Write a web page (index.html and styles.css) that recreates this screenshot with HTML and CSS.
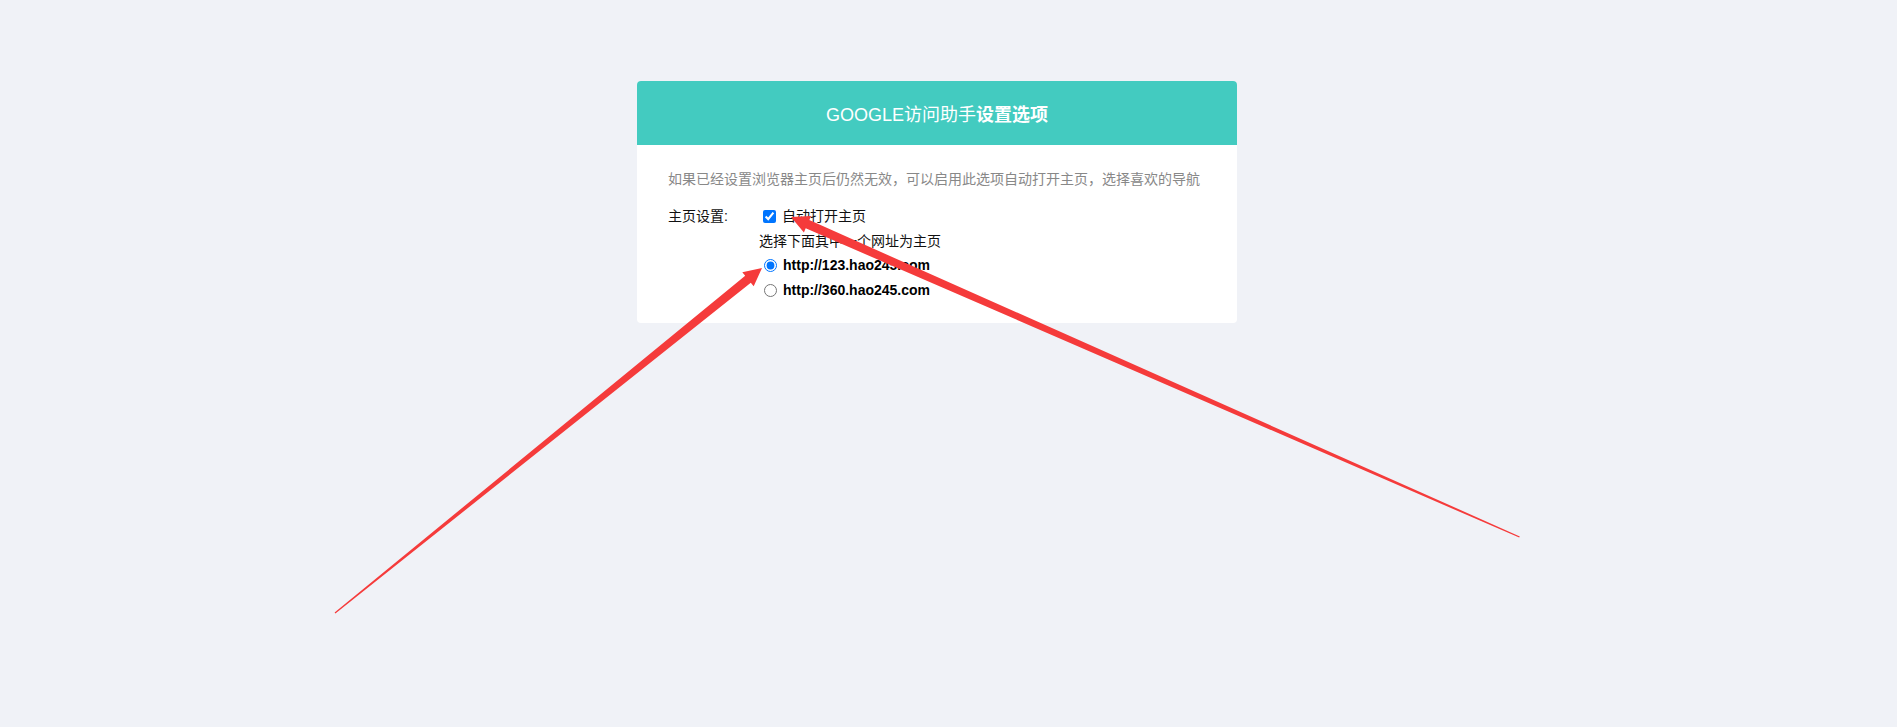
FILE: index.html
```html
<!DOCTYPE html>
<html lang="zh-CN">
<head>
<meta charset="utf-8">
<title>GOOGLE访问助手设置选项</title>
<link rel="stylesheet" href="styles.css">
</head>
<body>
<div class="page">
  <div class="card">
    <div class="card-head">GOOGLE访问助手<b>设置选项</b></div>
    <div class="card-body">
      <p class="desc">如果已经设置浏览器主页后仍然无效，可以启用此选项自动打开主页，选择喜欢的导航</p>
      <div class="row">
        <div class="label">主页设置:</div>
        <div class="options">
          <label class="opt"><input type="checkbox" class="chk" checked>自动打开主页</label>
          <div class="hint">选择下面其中一个网址为主页</div>
          <label class="opt url"><input type="radio" class="rad" name="home" checked>http://123.hao245.com</label>
          <label class="opt url"><input type="radio" class="rad" name="home">http://360.hao245.com</label>
        </div>
      </div>
    </div>
  </div>
</div>
<svg class="arrows" width="1897" height="727" viewBox="0 0 1897 727" xmlns="http://www.w3.org/2000/svg">
  <polygon fill="#f53b3b" points="335.4,613.5 750.8,282.8 753.7,286.3 762,268 742.3,272.3 745.2,275.8 334.6,612.5"/>
  <polygon fill="#f53b3b" points="1519.8,536.4 809.3,220.1 811.1,216.0 791,217 803.9,232.4 805.7,228.3 1519.2,537.6"/>
</svg>
</body>
</html>
```
FILE: styles.css
```css
html, body {
  margin: 0;
  padding: 0;
}
body {
  background: #f0f2f7;
  font-family: "Liberation Sans", "Noto Sans CJK SC", sans-serif;
  width: 1897px;
  height: 727px;
  position: relative;
  overflow: hidden;
}
.page {
  padding: 81px 0 0 637px;
}
.card {
  width: 600px;
  background: #ffffff;
  border-radius: 4px;
  overflow: hidden;
}
.card-head {
  height: 64px;
  background: #43cbc0;
  color: #ffffff;
  font-size: 18px;
  display: flex;
  align-items: center;
  justify-content: center;
}
.card-head b {
  font-weight: bold;
}
.card-body {
  padding: 24px 31px 20px 31px;
}
.desc {
  margin: 0;
  font-size: 14px;
  line-height: 20px;
  color: #888888;
}
.row {
  display: flex;
  margin-top: 15px;
  font-size: 14px;
  color: #111111;
}
.label {
  width: 91px;
  line-height: 25px;
}
.options {
  display: flex;
  flex-direction: column;
}
.opt {
  display: flex;
  align-items: center;
  height: 25px;
  line-height: 25px;
}
.hint {
  line-height: 24px;
  height: 24px;
}
.url {
  font-weight: bold;
  color: #000000;
}
.chk {
  width: 13px;
  height: 13px;
  margin: 0 6px 0 4px;
}
.rad {
  width: 13px;
  height: 13px;
  margin: 0 6px 0 5px;
}
.arrows {
  position: absolute;
  top: 0;
  left: 0;
  pointer-events: none;
}
```
